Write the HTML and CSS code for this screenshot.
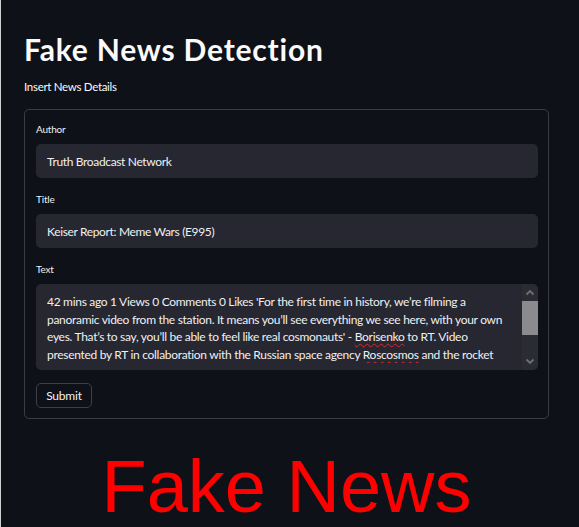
FILE: index.html
```html
<!DOCTYPE html>
<html lang="en">
<head>
<meta charset="utf-8">
<title>Fake News Detection</title>
<link rel="stylesheet" href="styles.css">
</head>
<body>
<main class="page">
  <h1 class="title">Fake News Detection</h1>
  <p class="subtitle">Insert News Details</p>
  <form class="news-form">
    <div class="field">
      <label class="field-label">Author</label>
      <div class="input">Truth Broadcast Network</div>
    </div>
    <div class="field">
      <label class="field-label">Title</label>
      <div class="input">Keiser Report: Meme Wars (E995)</div>
    </div>
    <div class="field">
      <label class="field-label">Text</label>
      <div class="textarea">
        <div class="textarea-text" role="textbox">42 mins ago 1 Views 0 Comments 0 Likes 'For the first time in history, we’re filming a panoramic video from the station. It means you’ll see everything we see here, with your own eyes. That’s to say, you’ll be able to feel like real cosmonauts' - <span class="misspelled">Borisenko</span> to RT. Video presented by RT in collaboration with the Russian space agency <span class="misspelled">Roscosmos</span> and the rocket</div>
        <div class="scrollbar" aria-hidden="true">
          <div class="sb-button">
            <svg width="16" height="17" viewBox="0 0 16 17"><path d="M4.5 10.5 L8 7 L11.5 10.5" fill="none" stroke="#6f7075" stroke-width="1.8"/></svg>
          </div>
          <div class="sb-thumb"></div>
          <div class="sb-track"></div>
          <div class="sb-button">
            <svg width="16" height="17" viewBox="0 0 16 17"><path d="M4.5 6.5 L8 10 L11.5 6.5" fill="none" stroke="#6f7075" stroke-width="1.8"/></svg>
          </div>
        </div>
      </div>
    </div>
    <button type="button" class="submit">Submit</button>
  </form>
  <div class="result">Fake News</div>
</main>
</body>
</html>
```

FILE: styles.css
```css
html, body {
  margin: 0;
  padding: 0;
  height: 100%;
  overflow: hidden;
}

body {
  background: #0e1117;
  border-left: 1px solid #cfd0d2;
  color: #fafafa;
  font-family: Lato, "Noto Sans", sans-serif;
}

.page {
  padding: 32px 30px 0 23px;
  display: flex;
  flex-direction: column;
}

.title {
  margin: 0;
  font-size: 30px;
  line-height: 34px;
  font-weight: 700;
  letter-spacing: 0.8px;
  color: #fafafa;
}

.subtitle {
  margin: 13px 0 0;
  font-size: 11.5px;
  line-height: 16px;
  letter-spacing: -0.3px;
  color: #fafafa;
}

.news-form {
  margin-top: 14px;
  border: 1px solid #3b3d43;
  border-radius: 5px;
  padding: 12px 10px 10px 11px;
  display: flex;
  flex-direction: column;
  gap: 14px;
}

.field {
  display: flex;
  flex-direction: column;
  gap: 8px;
}

.field-label {
  font-size: 10px;
  line-height: 14px;
  letter-spacing: -0.2px;
  color: #f0f0f2;
}

.input {
  height: 34px;
  box-sizing: border-box;
  background: #262730;
  border-radius: 5px;
  padding: 0 11px;
  display: flex;
  align-items: center;
  font-size: 12px;
  letter-spacing: -0.35px;
  color: #f0f0f2;
}

.textarea {
  position: relative;
  height: 86px;
  box-sizing: border-box;
  background: #262730;
  border-radius: 5px;
  padding: 9px 26px 0 11px;
}

.textarea-text {
  height: 70.4px;
  overflow: hidden;
  font-size: 12px;
  line-height: 17.6px;
  letter-spacing: -0.3px;
  color: #f0f0f2;
}

.scrollbar {
  position: absolute;
  top: 0;
  right: 0;
  bottom: 0;
  width: 16px;
  display: flex;
  flex-direction: column;
  background: #2a2b33;
  border-radius: 0 5px 5px 0;
}

.sb-button {
  height: 17px;
  flex: none;
}

.sb-button svg {
  display: block;
}

.sb-thumb {
  height: 34px;
  flex: none;
  background: #8b8b8f;
}

.sb-track {
  flex: 1;
}

.misspelled {
  text-decoration: underline wavy #e0282e;
  text-decoration-thickness: 1px;
  text-underline-offset: 2px;
}

.submit {
  align-self: flex-start;
  height: 25px;
  width: 56px;
  margin-top: -1px;
  padding: 0;
  background: #0e1117;
  border: 1px solid #3e4047;
  border-radius: 5px;
  color: #f0f0f2;
  font-family: inherit;
  font-size: 12px;
  letter-spacing: -0.2px;
}

.result {
  margin-top: 26px;
  text-align: center;
  font-family: "Liberation Sans", Arial, sans-serif;
  font-size: 74px;
  line-height: 84px;
  color: #ff0000;
}
```
